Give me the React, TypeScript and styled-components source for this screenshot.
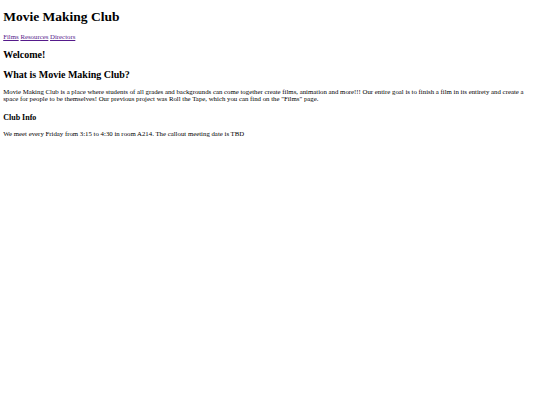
import React from "react";
import styled, { createGlobalStyle } from "styled-components";

const GlobalStyle = createGlobalStyle`
  html, body {
    background: #ffffff;
  }
  body {
    margin: 0 3.2px;
    font-family: "Liberation Serif", "Times New Roman", serif;
    font-size: 6.8px;
    line-height: 7px;
    color: #000000;
  }
`;

const Title = styled.h1`
  font-size: 13.5px;
  line-height: 15px;
  margin: 8.5px 0;
  font-weight: bold;
`;

const Nav = styled.p`
  margin: 9.5px 0 8px;
  line-height: 8px;
`;

const NavLink = styled.a`
  color: #551a8b;
  text-decoration: underline;
`;

const Heading = styled.h2`
  font-size: 10px;
  line-height: 12px;
  margin: 8px 0 7px;
  font-weight: bold;
`;

const SubHeading = styled.h3`
  font-size: 8px;
  line-height: 9px;
  margin: 11px 0 7.5px;
  font-weight: bold;
`;

const Text = styled.p`
  margin: 7px 0;
`;

const App = () => {
  return (
    <>
      <GlobalStyle />
      <Title>Movie Making Club</Title>
      <Nav>
        <NavLink href="#films">Films</NavLink>{" "}
        <NavLink href="#resources">Resources</NavLink>{" "}
        <NavLink href="#directors">Directors</NavLink>
      </Nav>
      <Heading>Welcome!</Heading>
      <Heading>What is Movie Making Club?</Heading>
      <Text>
        Movie Making Club is a place where students of all grades and
        backgrounds can come together create films, animation and more!!! Our
        entire goal is to finish a film in its entirety and create a space for
        people to be themselves! Our previous project was Roll the Tape, which
        you can find on the "Films" page.
      </Text>
      <SubHeading>Club Info</SubHeading>
      <Text>
        We meet every Friday from 3:15 to 4:30 in room A214. The callout
        meeting date is TBD
      </Text>
    </>
  );
};

export default App;
